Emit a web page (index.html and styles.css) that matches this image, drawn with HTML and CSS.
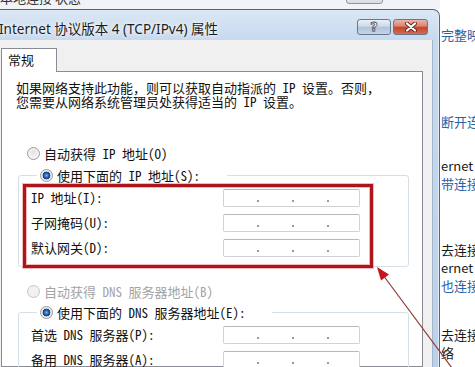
FILE: index.html
```html
<!DOCTYPE html>
<html lang="zh-CN">
<head>
  <meta charset="UTF-8">
  <title>Internet 协议版本 4 (TCP/IPv4) 属性</title>
  <link rel="stylesheet" href="styles.css">
</head>
<body>
  <div class="screen">
    <div class="left">
      <div class="behind-strip">
        <span class="behind-title">本地连接 状态</span>
        <span class="behind-btn"></span>
      </div>

      <div class="dialog">
        <div class="titlebar">
          <span class="title">Internet 协议版本 4 (TCP/IPv4) 属性</span>
          <div class="caption-btns">
            <span class="cap-btn help">?</span>
            <span class="cap-btn close">
              <svg width="14" height="10" viewBox="0 0 14 10">
                <path d="M3 1.5 L11 8.5 M11 1.5 L3 8.5" stroke="#6b2419" stroke-width="4" stroke-linecap="round"/>
                <path d="M3 1.5 L11 8.5 M11 1.5 L3 8.5" stroke="#fff" stroke-width="2.2" stroke-linecap="round"/>
              </svg>
            </span>
          </div>
        </div>

        <div class="client">
          <div class="tabs"><span class="tab active">常规</span></div>
          <div class="panel">
            <p class="intro">如果网络支持此功能，则可以获取自动指派的<span class="en"> IP </span>设置。否则，<br>您需要从网络系统管理员处获得适当的<span class="en"> IP </span>设置。</p>

            <div class="radio-row"><span class="radio"></span>自动获得 IP 地址(O)</div>
            <fieldset class="group ip-group">
              <legend><span class="radio checked"></span>使用下面的 IP 地址(S):</legend>
              <div class="field"><span>IP 地址(I):</span><span class="ip-box"><i></i><b></b><i></i><b></b><i></i><b></b><i></i></span></div>
              <div class="field"><span>子网掩码(U):</span><span class="ip-box"><i></i><b></b><i></i><b></b><i></i><b></b><i></i></span></div>
              <div class="field"><span>默认网关(D):</span><span class="ip-box"><i></i><b></b><i></i><b></b><i></i><b></b><i></i></span></div>
            </fieldset>

            <div class="radio-row disabled"><span class="radio"></span>自动获得 DNS 服务器地址(B)</div>
            <fieldset class="group dns-group">
              <legend><span class="radio checked"></span>使用下面的 DNS 服务器地址(E):</legend>
              <div class="field"><span>首选 DNS 服务器(P):</span><span class="ip-box"><i></i><b></b><i></i><b></b><i></i><b></b><i></i></span></div>
              <div class="field"><span>备用 DNS 服务器(A):</span><span class="ip-box"><i></i><b></b><i></i><b></b><i></i><b></b><i></i></span></div>
            </fieldset>
          </div>
        </div>
      </div>
    </div>

    <div class="side">
      <div class="blk blk-a link">完整映</div>
      <div class="blk blk-b link">断开连</div>
      <div class="blk blk-c">ernet<br><span class="link">带连接</span></div>
      <div class="blk blk-d">去连接<br>ernet<br><span class="link">也连接</span></div>
      <div class="blk blk-e">去连接<br>络</div>
    </div>
  </div>

  <!-- annotation drawn over the screenshot -->
  <svg class="annot" width="475" height="367" viewBox="0 0 475 367">
    <rect x="24.5" y="185.5" width="347" height="81" fill="none" stroke="rgba(214,60,60,0.35)" stroke-width="5"/>
    <rect x="24.5" y="185.5" width="347" height="81" fill="none" stroke="#b0141b" stroke-width="3"/>
    <line x1="452" y1="368" x2="383" y2="275" stroke="#8e3a3a" stroke-width="1.2"/>
    <polygon points="377,267 389,274.5 381,280.5" fill="#c4161c"/>
  </svg>
</body>
</html>
```

FILE: styles.css
```css
* {
  box-sizing: border-box;
}

body {
  margin: 0;
  width: 475px;
  height: 367px;
  overflow: hidden;
  position: relative;
  background: #fff;
  font-family: "Noto Sans CJK SC", sans-serif;
  font-size: 13px;
  color: #111;
}

.screen {
  display: flex;
  height: 367px;
  overflow: hidden;
}

.left {
  width: 440px;
  flex: none;
  display: flex;
  flex-direction: column;
  min-height: 0;
}

/* window behind the dialog */
.behind-strip {
  height: 9px;
  flex: none;
  background: #f1f3f6;
  display: flex;
  overflow: hidden;
}

.behind-title {
  margin: -9px 0 0 0;
  line-height: 14px;
  font-size: 13px;
  color: #333;
}

.behind-btn {
  width: 37px;
  height: 12px;
  margin: -8px 0 0 265px;
  border: 1px solid #8d96a3;
  border-radius: 3px;
  background: linear-gradient(#f2f2f2, #d9dde2);
}

.dialog {
  flex: 1;
  min-height: 0;
  margin-left: -8px;
  width: 448px;
  display: flex;
  flex-direction: column;
  border: 1px solid #55677c;
  border-bottom: none;
  border-radius: 7px 7px 0 0;
  padding-right: 6px;
  background: linear-gradient(to bottom, #dbe7f4 0, #c6d9ee 30px, #bcd1e9 100%);
  box-shadow: inset -1px 0 0 #e2ecf6;
}

.titlebar {
  height: 30px;
  flex: none;
  display: flex;
  justify-content: space-between;
  padding: 9px 5px 0 6px;
}

.title {
  margin-top: 2px;
  font-family: "Noto Sans", "Noto Sans CJK SC", sans-serif;
  font-size: 13.5px;
  line-height: 17px;
  color: #1c1c1c;
  text-shadow: 0 0 6px #fff, 0 0 3px #fff;
}

.caption-btns {
  display: flex;
  gap: 2px;
  height: 16px;
}

.cap-btn {
  width: 34px;
  height: 16px;
  border: 1px solid #67788d;
  border-radius: 3px;
  display: flex;
  align-items: center;
  justify-content: center;
}

.help {
  background: linear-gradient(#e9eff7, #cfdbe9 45%, #afc3da 50%, #c3d4e8);
  font-family: "DejaVu Sans", sans-serif;
  font-weight: bold;
  font-size: 13px;
  line-height: 14px;
  color: #fff;
  -webkit-text-stroke: 0.8px #3b4d63;
}

.close {
  width: 35px;
  background: linear-gradient(#ebb3a5, #da8470 45%, #c6432d 50%, #d56a50);
}

.client {
  flex: 1;
  min-height: 0;
  background: #f0f0f0;
  border-right: 1px solid #a3b5ca;
  padding: 8px 9px 0 8px;
  display: flex;
  flex-direction: column;
}

.tabs {
  display: flex;
  flex: none;
  margin-bottom: -1px;
}

.tab {
  height: 24px;
  padding: 3px 22px 0 6px;
  border: 1px solid #898c95;
  border-bottom: none;
  background: #fff;
  line-height: 16px;
  position: relative;
}

.panel {
  flex: 1;
  min-height: 0;
  background: #fff;
  border: 1px solid #898c95;
  padding: 9px 13px 0 14px;
}

/* half-width latin like the system font of the dialog */
.en,
.radio-row,
.group {
  font-feature-settings: "hwid";
}

.intro {
  margin: 0 0 37px 0;
  line-height: 14px;
}

.radio-row {
  display: flex;
  align-items: center;
  height: 14px;
  padding-left: 11px;
}

.radio-row.disabled {
  color: #a3a3a3;
}

.radio {
  width: 13px;
  height: 13px;
  margin-right: 4px;
  border-radius: 50%;
  border: 1px solid #979a9e;
  background: radial-gradient(circle at 50% 40%, #e2e2e2 0, #f7f7f7 70%);
  flex: none;
}

.disabled .radio {
  border-color: #c6c6c6;
  background: #f1f1f1;
}

.radio.checked {
  background: radial-gradient(circle at 50% 50%, #7fb8ee 0, #2568be 2px, #163f7a 3.6px, #e9e9e9 4.2px, #f7f7f7 100%);
}

.group {
  margin: 8px 0 0 2px;
  padding: 7px 0 9px 12px;
  border: 1px solid #d5dfe5;
  border-radius: 3px;
  display: flex;
  flex-direction: column;
  gap: 7px;
}

.dns-group {
  margin-top: 7px;
  padding-bottom: 20px;
}

.group legend {
  display: flex;
  align-items: center;
  height: 14px;
  margin-left: 6px;
  padding: 0 0 0 3px;
}

.ip-group legend {
  width: 190px;
}

.dns-group legend {
  width: 235px;
}

.ip-group + .radio-row {
  margin-top: 17px;
}

.field {
  display: grid;
  grid-template-columns: 192px 137px;
  align-items: center;
  line-height: 14px;
}

.ip-box {
  height: 18px;
  border: 1px solid #cfd2d6;
  border-top-color: #b4b7bc;
  border-radius: 2px;
  background: #fff;
  display: flex;
}

.ip-box i {
  width: 33px;
}

.ip-box i:last-child {
  flex: 1;
}

.ip-box b {
  width: 2px;
  height: 2px;
  margin-top: 10px;
  border-radius: 1px;
  background: #7a7a7a;
}

/* window to the right of the dialog */
.side {
  flex: 1;
  padding-left: 1px;
  line-height: 18px;
  color: #1a1a1a;
  white-space: nowrap;
  overflow: hidden;
}

.link {
  color: #2a62a6;
}

.blk-a { margin-top: 26px; }
.blk-b { margin-top: 69px; }
.blk-c { margin-top: 26px; }
.blk-d { margin-top: 48px; }
.blk-e { margin-top: 31px; }

.annot {
  position: absolute;
  top: 0;
  left: 0;
  pointer-events: none;
}
```
